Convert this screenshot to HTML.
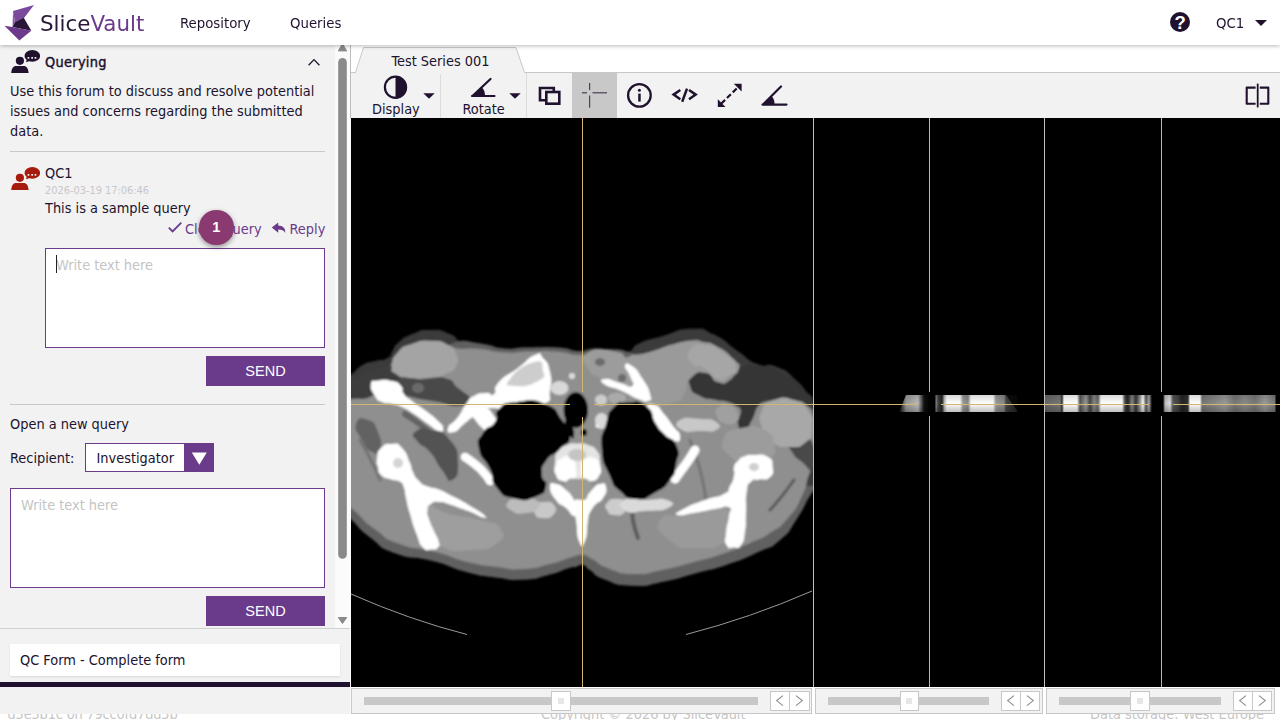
<!DOCTYPE html>
<html lang="en">
<head>
<meta charset="utf-8">
<title>SliceVault</title>
<style>
*{box-sizing:border-box}
html,body{margin:0;padding:0}
body{width:1280px;height:720px;overflow:hidden;position:relative;background:#fff;color:#20122e;
  font-family:"DejaVu Sans Condensed","DejaVu Sans","Liberation Sans",sans-serif;font-size:14.4px;font-stretch:condensed}
.abs{position:absolute}
/* header */
#hdr{position:absolute;left:0;top:0;width:1280px;height:45px;background:#fff;box-shadow:0 1px 4px rgba(0,0,0,.28);z-index:20}
#logo{position:absolute;left:4px;top:4px}
#brand{font-stretch:normal;will-change:transform;position:absolute;left:40px;top:5.5px;font-family:"DejaVu Sans","Liberation Sans",sans-serif;font-size:21.4px;line-height:36px;color:#2a1738;white-space:nowrap}
#brand b{font-weight:normal;color:#6b3a8a}
.nav{will-change:transform;position:absolute;top:-0.5px;line-height:45px;font-size:14.8px;color:#20122e;white-space:nowrap}
/* left */
#left{position:absolute;left:0;top:0;width:351px;height:714px;background:#f2f2f2;z-index:5;border-right:1px solid #fbfbfb}
#foot{position:absolute;left:0;top:700px;width:1280px;height:20px;background:#fff;z-index:1;color:#c6c6c6;font-size:14.4px;overflow:hidden}
.t{position:absolute;white-space:nowrap;line-height:20px;margin-top:.9px}
.hr{position:absolute;left:10px;width:315px;height:1px;background:#c9c9c9}
.ta{position:absolute;background:#fff;border:1px solid #6b3a8a;color:#c4c4c4}
.ta span{position:absolute;left:10px;top:5.7px;line-height:20px;white-space:nowrap}
.send{position:absolute;left:206px;width:119px;height:30px;background:#693b8a;color:#fff;text-align:center;line-height:30px;font-family:"Liberation Sans",sans-serif;font-size:14.5px}
.pu{color:#6b3a8a}
/* main */
#main{position:absolute;left:350px;top:44px;width:930px;height:670px;background:#fff;z-index:4}
#tb{position:absolute;left:0;top:28px;width:930px;height:46px;background:#f2f2f2;border-top:1px solid #c8c8c8;border-left:1px solid #c8c8c8}
#views{position:absolute;left:1px;top:74px;width:929px;height:569px;background:#000;overflow:hidden}
.sl{position:absolute;top:643.6px;height:26px;background:#f2f2f2;border:1px solid #c8c8c8}
.trk{position:absolute;top:8.6px;height:7.6px;background:#c8c8c8}
.th{position:absolute;top:2.6px;width:19.4px;height:19.4px;background:#fff;border:1px solid #c8c8c8}
.th i{position:absolute;left:5.6px;top:5.6px;width:6.2px;height:6.2px;background:#e6e6e6}
.ab{position:absolute;top:2.6px;width:39.2px;height:19.6px;background:#fff;border:1px solid #c8c8c8}
</style>
</head>
<body>
<div id="foot">
  <span class="t" style="left:7.5px;top:2.8px;letter-spacing:-0.15px">d5e5b1c on 79cc0fd7dd5b</span>
  <span class="t" style="left:541px;top:2.8px">Copyright © 2026 by SliceVault</span>
  <span class="t" style="left:1090px;top:2.8px">Data storage: West Europe</span>
</div>

<div id="hdr">
  <svg id="logo" width="36" height="38" viewBox="0 0 36 38">
    <polygon points="30,1 9,7 11,18 20,14" fill="#7b4a9d"/>
    <polygon points="9,7 11,18 8.5,23" fill="#8a5aaa"/>
    <polygon points="19.8,13.8 11,18 8.5,23 27.3,26.8" fill="#2a1738"/>
    <polygon points="0.5,21.7 8.5,23 27.3,26.8 15.3,36.6" fill="#6b3a8a"/>
  </svg>
  <div id="brand">Slice<b>Vault</b></div>
  <div class="nav" style="left:180px">Repository</div>
  <div class="nav" style="left:290px">Queries</div>
  <svg class="abs" style="left:1170px;top:12px" width="20" height="20" viewBox="0 0 20 20"><circle cx="10" cy="10" r="10" fill="#20122e"/><text x="10.1" y="16.6" text-anchor="middle" font-family="Liberation Sans, sans-serif" font-weight="bold" font-size="18.5" fill="#fff">?</text></svg>
  <div class="nav" style="left:1216px">QC1</div>
  <svg class="abs" style="left:1255px;top:20px" width="12" height="6" viewBox="0 0 12 6"><polygon points="0,0 12,0 6,6" fill="#20122e"/></svg>
</div>

<div id="left">
  <div class="abs" style="left:335px;top:45px;width:15px;height:583px;background:#fbfbfb"></div>
  <div class="abs" style="left:350px;top:45px;width:1px;height:73px;background:#bdbdbd"></div>
  <svg class="abs" style="left:335px;top:45px" width="16" height="583" viewBox="335 45 16 583">
    <polygon points="342.5,43.5 346.7,50.9 338.3,50.9" fill="#8a8a8a" stroke="#8a8a8a" stroke-width="1" stroke-linejoin="round"/>
    <rect x="338.2" y="58" width="8.6" height="500.8" rx="4.3" fill="#8a8a8a"/>
    <polygon points="338.3,617.5 346.7,617.5 342.5,623.5" fill="#8a8a8a" stroke="#8a8a8a" stroke-width="1" stroke-linejoin="round"/>
  </svg>
  <svg class="abs" style="left:8px;top:48px;fill:#20122e" width="32" height="28" viewBox="8 48 32 28"><g id="qi">
    <circle cx="19.9" cy="60.8" r="4.1"/>
    <path d="M11.2,72.9 C11.6,68.5 13.2,65.9 16.2,65.9 H23.6 C26.6,65.9 28.2,68.5 28.6,72.9 Z"/>
    <ellipse cx="32.3" cy="55.9" rx="7.8" ry="5.9"/>
    <polygon points="26,62.2 27.2,58 30.5,60.8"/>
    <g fill="#f2f2f2"><rect x="27.6" y="57" width="1.7" height="1.7"/><rect x="31.3" y="57" width="1.7" height="1.7"/><rect x="34.6" y="57" width="1.7" height="1.7"/></g>
  </g></svg>
  <div class="t" style="left:45px;top:51.6px;-webkit-text-stroke:0.42px #20122e;letter-spacing:0.3px">Querying</div>
  <svg class="abs" style="left:306px;top:56px" width="16" height="12" viewBox="306 56 16 12"><path d="M308.6,65.3 L314,59.6 L319.4,65.3" fill="none" stroke="#20122e" stroke-width="1.25"/></svg>
  <div class="t" style="left:10px;top:80.4px">Use this forum to discuss and resolve potential</div>
  <div class="t" style="left:10px;top:100.3px">issues and concerns regarding the submitted</div>
  <div class="t" style="left:10px;top:120.2px">data.</div>
  <div class="hr" style="top:151px"></div>
  <svg class="abs" style="left:8px;top:165.2px;fill:#a61b0d" width="32" height="28" viewBox="8 48 32 28"><use href="#qi"/></svg>
  <div class="t" style="left:45px;top:161.8px">QC1</div>
  <div class="t" style="left:45px;top:180px;font-size:10.9px;color:#c6c6cc">2026-03-19 17:06:46</div>
  <div class="t" style="left:45px;top:197.5px">This is a sample query</div>
  <svg class="abs" style="left:167px;top:220px" width="16" height="14" viewBox="167 220 16 14"><path d="M168.8,227.6 L172.6,231.4 L181.3,222.7" fill="none" stroke="#6b3a8a" stroke-width="1.8"/></svg>
  <div class="t pu" style="left:185px;top:217.8px">Close query</div>
  <svg class="abs" style="left:271px;top:221px" width="16" height="13" viewBox="271 221 16 13"><path d="M278.2,222.4 L271.8,227.6 L278.2,232.8 V229.6 C281.6,229.6 284,230.4 285.2,233 C285.6,228.4 283,225.8 278.2,225.6 Z" fill="#6b3a8a"/></svg>
  <div class="t pu" style="left:289.5px;top:217.8px">Reply</div>
  <div class="ta" style="left:45px;top:248px;width:280px;height:100px"><span>Write text here</span><i style="position:absolute;left:10px;top:6px;width:1px;height:18px;background:#222"></i></div>
  <div class="send" style="top:356px">SEND</div>
  <div class="abs" style="left:199.2px;top:210.2px;width:34.4px;height:34.4px;border-radius:50%;background:#8a3a70;box-shadow:0 2px 5px rgba(0,0,0,.4);color:#fff;text-align:center;line-height:34.4px;font-family:'Liberation Sans',sans-serif;font-weight:bold;font-size:14.5px">1</div>
  <div class="hr" style="top:404px"></div>
  <div class="t" style="left:10px;top:412.8px">Open a new query</div>
  <div class="t" style="left:10px;top:447.5px">Recipient:</div>
  <div class="abs" style="left:85px;top:443.2px;width:129px;height:29.2px;background:#fff;border:1px solid #6b3a8a"><span class="t" style="left:10.5px;top:3px">Investigator</span><div class="abs" style="right:0;top:0;width:29px;height:27px;background:#693b8a"></div>
    <svg class="abs" style="left:105px;top:8px" width="17" height="14" viewBox="0 0 17 14"><polygon points="0.8,0.6 15.8,0.6 8.3,12.8" fill="#fff"/></svg></div>
  <div class="ta" style="left:10px;top:488px;width:315px;height:100px"><span>Write text here</span></div>
  <div class="send" style="top:596px">SEND</div>
  <div class="abs" style="left:0;top:628px;width:350px;height:1px;background:#d0d0d0"></div>
  <div class="abs" style="left:10px;top:643.6px;width:330px;height:32px;background:#fff;box-shadow:0 1px 2px rgba(0,0,0,.10)"><span class="t" style="left:10px;top:5.4px">QC Form - Complete form</span></div>
  <div class="abs" style="left:0;top:682.2px;width:350px;height:4.8px;background:#20122e"></div>
</div>

<div id="main">
  <svg class="abs" style="left:0;top:0;z-index:3" width="930" height="30" viewBox="350 44 930 30">
    <polygon points="355.5,72.5 363.5,47.5 516,47.5 524.5,72.5" fill="#f2f2f2" stroke="#c8c8c8" stroke-width="1"/>
    <rect x="356" y="72" width="168" height="2" fill="#f2f2f2"/>
  </svg>
  <div class="t" style="left:41.5px;top:6.0px;font-size:14.4px;z-index:4">Test Series 001</div>
  <div id="tb">
  <svg class="abs" style="left:-1px;top:-1px" width="930" height="46" viewBox="350 72 930 46">
    <g fill="#20122e" stroke="none">
      <!-- active bg -->
      <rect x="572" y="73" width="45" height="45" fill="#c8c8c8"/>
      <!-- separators -->
      <rect x="440" y="73" width="1" height="45" fill="#dcdcdc"/>
      <rect x="526" y="73" width="1" height="45" fill="#dcdcdc"/>
      <!-- display icon -->
      <circle cx="395.5" cy="87.3" r="10.6" fill="none" stroke="#20122e" stroke-width="2.2"/>
      <path d="M395.5,76.2 A11.1,11.1 0 0 1 395.5,98.4 Z"/>
      <polygon points="423.3,93.2 434.7,93.2 429,98.8"/>
      <!-- rotate icon -->
      <path d="M472,96 L494.5,96 M473,95.5 L490.5,79" fill="none" stroke="#20122e" stroke-width="2.2" stroke-linecap="round"/>
      <path d="M473,95.5 L481.8,87.2 A12,12 0 0 1 485,95.5 Z"/>
      <polygon points="509.3,93.2 520.7,93.2 515,98.8"/>
      <!-- windows icon -->
      <path d="M545.5,100.2 H540 V88 H553.8 V91.5" fill="none" stroke="#20122e" stroke-width="2.6"/>
      <rect x="546.3" y="92" width="13" height="11.7" fill="none" stroke="#20122e" stroke-width="2.6"/>
      <!-- crosshair icon -->
      <g fill="#4b4058">
        <rect x="589" y="83" width="1.2" height="7"/><rect x="589" y="95.5" width="1.2" height="12.2"/>
        <rect x="582" y="92.2" width="5" height="1.2"/><rect x="592.5" y="92.2" width="14.5" height="1.2"/>
      </g>
      <!-- info icon -->
      <circle cx="639.4" cy="95.4" r="11.3" fill="none" stroke="#20122e" stroke-width="2.3"/>
      <rect x="638.2" y="93.6" width="2.5" height="8"/><circle cx="639.4" cy="90.2" r="1.5"/>
      <!-- expand -->
      <path d="M719,105.8 L740.3,85" fill="none" stroke="#20122e" stroke-width="2.2" stroke-dasharray="5.5,2.6" stroke-dashoffset="-3"/>
      <polygon points="741.6,83.8 741.6,91.5 733.8,83.8"/>
      <polygon points="717.8,107 717.8,99.3 725.5,107"/>
      <!-- angle icon -->
      <path d="M762.5,104.6 L786.5,104.6 M763.5,104 L781,86.5" fill="none" stroke="#20122e" stroke-width="2.2" stroke-linecap="round"/>
      <path d="M763.5,104 L771.5,96 A11,11 0 0 1 774.5,104 Z"/>
      <!-- split icon -->
      <path d="M1255.6,87.6 H1246.7 V103.8 H1255.6 M1259.8,87.6 H1268.3 V103.8 H1259.8" fill="none" stroke="#20122e" stroke-width="2.1" stroke-linejoin="round"/>
      <rect x="1256.8" y="83.6" width="1.8" height="23.8"/>
    </g>
    <path d="M680.3,90 L673.6,94.6 L680.3,99.2 M687,88.6 L682.2,101.8 M689,90 L695.7,94.6 L689,99.2" fill="none" stroke="#20122e" stroke-width="2.5" stroke-linejoin="miter"/>
  </svg>
  <div class="t" style="left:21px;top:25.4px">Display</div>
  <div class="t" style="left:111.5px;top:25.4px">Rotate</div>
  </div>
  <div id="views">
<svg class="abs" style="left:0;top:0" width="929" height="569" viewBox="351 118 929 569">
<defs>
<filter id="bl" x="-5%" y="-5%" width="110%" height="110%"><feGaussianBlur stdDeviation="1.3"/></filter>
<clipPath id="c1"><rect x="351" y="118" width="462" height="569"/></clipPath>
</defs>
<g clip-path="url(#c1)"><g filter="url(#bl)">
<!--CT-->
<path d="M340.0,380.0C346.3,354.9 343.5,379.6 351.0,374.6C358.5,369.6 354.5,369.5 362.5,365.0C370.5,360.5 366.7,363.3 375.0,361.0C383.3,358.7 381.5,361.7 387.5,358.0C393.5,354.3 389.5,355.0 393.0,350.0C396.5,345.0 391.5,348.3 398.0,343.0C404.5,337.7 401.5,338.3 412.5,334.0C423.5,329.7 418.5,330.0 431.0,330.0C443.5,330.0 439.5,330.0 450.0,334.0C460.5,338.0 451.5,338.7 462.5,342.0C473.5,345.3 469.2,341.8 483.0,344.0C496.8,346.2 489.3,347.3 504.0,348.5C518.7,349.7 509.0,347.8 527.0,347.5C545.0,347.2 540.7,346.3 558.0,347.5C575.3,348.7 568.3,350.7 579.0,351.0C589.7,351.3 581.3,349.2 590.0,348.5C598.7,347.8 593.0,347.8 605.0,349.0C617.0,350.2 614.3,354.0 626.0,352.0C637.7,350.0 627.7,348.3 640.0,343.0C652.3,337.7 646.0,340.8 663.0,336.0C680.0,331.2 674.0,329.2 691.0,328.8C708.0,328.3 698.5,327.2 714.0,334.6C729.5,342.0 723.3,341.3 737.6,351.0C751.9,360.7 744.0,358.6 757.0,363.8C770.0,369.0 763.5,361.3 776.5,366.7C789.5,372.1 784.3,369.0 796.0,380.0C807.7,391.0 802.8,388.1 811.5,399.8C820.2,411.5 816.5,398.3 822.0,415.0C827.5,431.7 828.0,428.3 828.0,450.0C828.0,471.7 827.7,465.3 822.0,480.0C816.3,494.7 819.4,481.0 811.0,494.0C802.6,507.0 807.0,503.7 796.7,519.0C786.4,534.3 793.2,528.8 780.0,540.0C766.8,551.2 775.0,544.2 757.0,552.5C739.0,560.8 746.1,558.2 726.0,565.0C705.9,571.8 717.7,567.4 696.7,573.0C675.7,578.6 684.6,577.4 663.0,581.7C641.4,586.0 651.3,586.5 632.0,585.8C612.7,585.1 619.0,584.9 605.0,579.6C591.0,574.3 597.3,574.9 590.0,570.0C582.7,565.1 588.0,566.0 583.0,565.0C578.0,564.0 579.8,566.0 575.0,567.0C570.2,568.0 577.8,565.3 568.8,568.0C559.8,570.7 563.2,571.1 548.0,575.0C532.8,578.9 540.3,578.8 523.0,579.6C505.7,580.4 514.8,580.0 496.0,577.5C477.2,575.0 487.7,577.5 466.7,572.0C445.7,566.5 456.6,567.2 433.0,561.0C409.4,554.8 416.7,561.2 396.0,553.5C375.3,545.8 386.0,549.5 371.0,538.0C356.0,526.5 362.0,530.0 351.0,519.0C340.0,508.0 344.3,528.0 338.0,505.0C331.7,482.0 331.3,491.7 332.0,450.0C332.7,408.3 333.7,405.1 340.0,380.0Z" fill="#3a3a3a" />
<clipPath id="lowc"><rect x="330" y="486" width="500" height="120"/></clipPath>
<path d="M340.0,380.0C346.3,354.9 343.5,379.6 351.0,374.6C358.5,369.6 354.5,369.5 362.5,365.0C370.5,360.5 366.7,363.3 375.0,361.0C383.3,358.7 381.5,361.7 387.5,358.0C393.5,354.3 389.5,355.0 393.0,350.0C396.5,345.0 391.5,348.3 398.0,343.0C404.5,337.7 401.5,338.3 412.5,334.0C423.5,329.7 418.5,330.0 431.0,330.0C443.5,330.0 439.5,330.0 450.0,334.0C460.5,338.0 451.5,338.7 462.5,342.0C473.5,345.3 469.2,341.8 483.0,344.0C496.8,346.2 489.3,347.3 504.0,348.5C518.7,349.7 509.0,347.8 527.0,347.5C545.0,347.2 540.7,346.3 558.0,347.5C575.3,348.7 568.3,350.7 579.0,351.0C589.7,351.3 581.3,349.2 590.0,348.5C598.7,347.8 593.0,347.8 605.0,349.0C617.0,350.2 614.3,354.0 626.0,352.0C637.7,350.0 627.7,348.3 640.0,343.0C652.3,337.7 646.0,340.8 663.0,336.0C680.0,331.2 674.0,329.2 691.0,328.8C708.0,328.3 698.5,327.2 714.0,334.6C729.5,342.0 723.3,341.3 737.6,351.0C751.9,360.7 744.0,358.6 757.0,363.8C770.0,369.0 763.5,361.3 776.5,366.7C789.5,372.1 784.3,369.0 796.0,380.0C807.7,391.0 802.8,388.1 811.5,399.8C820.2,411.5 816.5,398.3 822.0,415.0C827.5,431.7 828.0,428.3 828.0,450.0C828.0,471.7 827.7,465.3 822.0,480.0C816.3,494.7 819.4,481.0 811.0,494.0C802.6,507.0 807.0,503.7 796.7,519.0C786.4,534.3 793.2,528.8 780.0,540.0C766.8,551.2 775.0,544.2 757.0,552.5C739.0,560.8 746.1,558.2 726.0,565.0C705.9,571.8 717.7,567.4 696.7,573.0C675.7,578.6 684.6,577.4 663.0,581.7C641.4,586.0 651.3,586.5 632.0,585.8C612.7,585.1 619.0,584.9 605.0,579.6C591.0,574.3 597.3,574.9 590.0,570.0C582.7,565.1 588.0,566.0 583.0,565.0C578.0,564.0 579.8,566.0 575.0,567.0C570.2,568.0 577.8,565.3 568.8,568.0C559.8,570.7 563.2,571.1 548.0,575.0C532.8,578.9 540.3,578.8 523.0,579.6C505.7,580.4 514.8,580.0 496.0,577.5C477.2,575.0 487.7,577.5 466.7,572.0C445.7,566.5 456.6,567.2 433.0,561.0C409.4,554.8 416.7,561.2 396.0,553.5C375.3,545.8 386.0,549.5 371.0,538.0C356.0,526.5 362.0,530.0 351.0,519.0C340.0,508.0 344.3,528.0 338.0,505.0C331.7,482.0 331.3,491.7 332.0,450.0C332.7,408.3 333.7,405.1 340.0,380.0Z" fill="#606060" clip-path="url(#lowc)"/>
<path d="M456.0,342.0C465.0,339.3 467.0,341.8 483.0,344.0C499.0,346.2 489.3,347.3 504.0,348.5C518.7,349.7 509.0,347.8 527.0,347.5C545.0,347.2 540.7,346.3 558.0,347.5C575.3,348.7 563.3,350.5 579.0,351.0C594.7,351.5 588.7,348.7 605.0,349.0C621.3,349.3 620.3,349.0 628.0,352.0C635.7,355.0 644.0,356.0 628.0,358.0C612.0,360.0 612.7,358.7 580.0,358.0C547.3,357.3 563.3,357.3 530.0,356.0C496.7,354.7 504.7,355.3 480.0,354.0C455.3,352.7 464.0,356.0 456.0,352.0C448.0,348.0 447.0,344.7 456.0,342.0Z" fill="#5e5e5e" />
<path d="M340.0,400.0C345.3,382.0 341.7,400.0 351.0,396.0C360.3,392.0 357.0,394.7 368.0,388.0C379.0,381.3 374.7,386.0 384.0,376.0C393.3,366.0 386.7,368.3 396.0,358.0C405.3,347.7 400.0,350.7 412.0,345.0C424.0,339.3 420.0,341.0 432.0,341.0C444.0,341.0 439.3,342.5 448.0,345.0C456.7,347.5 447.3,347.2 458.0,348.5C468.7,349.8 464.3,347.7 480.0,349.0C495.7,350.3 488.3,351.7 505.0,352.5C521.7,353.3 513.0,351.8 530.0,351.5C547.0,351.2 539.3,350.3 556.0,351.5C572.7,352.7 565.3,354.5 580.0,355.0C594.7,355.5 585.3,352.3 600.0,353.0C614.7,353.7 609.0,356.7 624.0,357.0C639.0,357.3 631.3,357.0 645.0,354.0C658.7,351.0 650.7,352.3 665.0,348.0C679.3,343.7 674.3,342.7 688.0,341.0C701.7,339.3 694.7,339.3 706.0,343.0C717.3,346.7 711.3,344.3 722.0,352.0C732.7,359.7 734.7,356.7 738.0,366.0C741.3,375.3 737.3,371.3 732.0,380.0C726.7,388.7 722.7,384.7 722.0,392.0C721.3,399.3 721.3,396.7 730.0,402.0C738.7,407.3 736.3,408.0 748.0,408.0C759.7,408.0 751.0,404.7 765.0,402.0C779.0,399.3 776.3,399.0 790.0,400.0C803.7,401.0 797.7,398.3 806.0,405.0C814.3,411.7 810.3,405.0 815.0,420.0C819.7,435.0 821.7,432.7 820.0,450.0C818.3,467.3 816.0,456.7 810.0,472.0C804.0,487.3 809.3,480.7 802.0,496.0C794.7,511.3 798.7,505.7 788.0,518.0C777.3,530.3 782.7,524.7 770.0,533.0C757.3,541.3 766.0,536.0 750.0,543.0C734.0,550.0 740.7,547.7 722.0,554.0C703.3,560.3 714.0,556.7 694.0,562.0C674.0,567.3 682.0,566.0 662.0,570.0C642.0,574.0 651.3,574.3 634.0,574.0C616.7,573.7 624.0,574.0 610.0,569.0C596.0,564.0 601.0,563.7 592.0,559.0C583.0,554.3 589.7,555.7 583.0,555.0C576.3,554.3 583.0,554.0 572.0,557.0C561.0,560.0 566.3,560.0 550.0,564.0C533.7,568.0 540.7,568.0 523.0,569.0C505.3,570.0 515.3,569.3 497.0,567.0C478.7,564.7 488.3,567.0 468.0,562.0C447.7,557.0 458.7,558.0 436.0,552.0C413.3,546.0 420.0,551.3 400.0,544.0C380.0,536.7 390.7,540.7 376.0,530.0C361.3,519.3 368.0,523.7 356.0,512.0C344.0,500.3 347.0,515.7 340.0,495.0C333.0,474.3 335.0,481.7 335.0,450.0C335.0,418.3 334.7,418.0 340.0,400.0Z" fill="#8f8f8f" />
<path d="M398.0,379.0C404.0,373.7 404.3,376.3 420.0,376.0C435.7,375.7 432.3,374.0 445.0,378.0C457.7,382.0 449.7,380.7 458.0,388.0C466.3,395.3 470.0,394.0 470.0,400.0C470.0,406.0 468.7,405.3 458.0,406.0C447.3,406.7 452.3,404.7 438.0,402.0C423.7,399.3 427.0,401.3 415.0,398.0C403.0,394.7 407.7,398.3 402.0,392.0C396.3,385.7 392.0,384.3 398.0,379.0Z" fill="#484848" />
<ellipse cx="418" cy="388" rx="6" ry="5" fill="#6a6a6a"/>
<path d="M340.0,378.0C344.0,370.7 342.0,380.0 352.0,378.0C362.0,376.0 358.0,376.0 370.0,372.0C382.0,368.0 379.3,366.0 388.0,366.0C396.7,366.0 392.7,367.3 396.0,372.0C399.3,376.7 403.3,376.0 398.0,380.0C392.7,384.0 388.7,378.7 380.0,384.0C371.3,389.3 381.3,391.0 372.0,396.0C362.7,401.0 362.7,397.7 352.0,399.0C341.3,400.3 344.0,407.0 340.0,400.0C336.0,393.0 336.0,385.3 340.0,378.0Z" fill="#3c3c3c" />
<path d="M405.0,414.0C410.7,418.0 410.3,416.7 422.0,426.0C433.7,435.3 434.0,436.7 440.0,442.0" fill="none" stroke="#636363" stroke-width="6" stroke-linecap="round" />
<path d="M692.0,372.0C697.3,367.3 697.3,368.7 706.0,372.0C714.7,375.3 710.0,379.3 718.0,382.0C726.0,384.7 722.7,384.7 730.0,380.0C737.3,375.3 730.0,372.7 740.0,368.0C750.0,363.3 746.7,364.7 760.0,366.0C773.3,367.3 766.7,365.3 780.0,372.0C793.3,378.7 789.3,376.0 800.0,386.0C810.7,396.0 815.3,397.3 812.0,402.0C808.7,406.7 803.3,401.3 790.0,400.0C776.7,398.7 782.0,396.7 772.0,398.0C762.0,399.3 766.7,396.7 760.0,404.0C753.3,411.3 757.0,411.3 752.0,420.0C747.0,428.7 749.7,428.7 745.0,430.0C740.3,431.3 739.7,431.3 738.0,424.0C736.3,416.7 743.3,415.3 740.0,408.0C736.7,400.7 736.0,404.7 728.0,402.0C720.0,399.3 725.3,402.0 716.0,400.0C706.7,398.0 708.7,400.7 700.0,396.0C691.3,391.3 692.7,394.0 690.0,386.0C687.3,378.0 686.7,376.7 692.0,372.0Z" fill="#363636" />
<path d="M648.0,380.0C653.0,375.3 653.7,376.7 665.0,378.0C676.3,379.3 677.7,378.7 682.0,384.0C686.3,389.3 684.7,391.3 678.0,394.0C671.3,396.7 671.3,392.7 662.0,392.0C652.7,391.3 654.7,396.0 650.0,392.0C645.3,388.0 643.0,384.7 648.0,380.0Z" fill="#5a5a5a" />
<path d="M415.0,432.0C419.7,428.0 420.3,427.3 432.0,430.0C443.7,432.7 441.3,429.3 450.0,440.0C458.7,450.7 457.3,448.7 458.0,462.0C458.7,475.3 457.3,477.3 452.0,480.0C446.7,482.7 449.3,479.3 442.0,470.0C434.7,460.7 438.0,461.3 430.0,452.0C422.0,442.7 423.0,448.7 418.0,442.0C413.0,435.3 410.3,436.0 415.0,432.0Z" fill="#525252" />
<path d="M356.0,424.0C358.0,417.3 360.7,417.3 368.0,420.0C375.3,422.7 374.0,422.0 378.0,432.0C382.0,442.0 382.0,443.3 380.0,450.0C378.0,456.7 378.0,455.3 372.0,452.0C366.0,448.7 367.3,449.3 362.0,440.0C356.7,430.7 354.0,430.7 356.0,424.0Z" fill="#626262" />
<path d="M788.0,440.0C790.7,435.3 791.7,436.7 800.0,438.0C808.3,439.3 808.7,434.0 813.0,444.0C817.3,454.0 816.7,462.0 813.0,468.0C809.3,474.0 809.0,467.3 802.0,462.0C795.0,456.7 796.7,459.3 792.0,452.0C787.3,444.7 785.3,444.7 788.0,440.0Z" fill="#4a4a4a" />
<path d="M794.0,480.0C790.0,485.3 790.0,486.0 782.0,496.0C774.0,506.0 774.0,505.3 770.0,510.0" fill="none" stroke="#5a5a5a" stroke-width="3" stroke-linecap="round" />
<path d="M632.0,512.0C632.7,516.3 632.0,516.3 634.0,525.0C636.0,533.7 636.7,533.7 638.0,538.0" fill="none" stroke="#5c5c5c" stroke-width="4" stroke-linecap="round" />
<path d="M360.0,440.0C364.0,447.3 365.3,448.7 372.0,462.0C378.7,475.3 377.3,474.0 380.0,480.0" fill="none" stroke="#727272" stroke-width="3" stroke-linecap="round" />
<path d="M690.0,440.0C693.3,450.0 694.7,450.0 700.0,470.0C705.3,490.0 704.0,490.0 706.0,500.0" fill="none" stroke="#747474" stroke-width="3" stroke-linecap="round" />
<path d="M392.0,366.0C392.7,358.7 391.3,359.3 398.0,352.0C404.7,344.7 400.7,347.7 412.0,344.0C423.3,340.3 420.0,340.7 432.0,341.0C444.0,341.3 440.0,340.7 448.0,345.0C456.0,349.3 453.3,347.0 456.0,354.0C458.7,361.0 459.3,359.3 456.0,366.0C452.7,372.7 454.7,370.0 446.0,374.0C437.3,378.0 442.0,376.7 430.0,378.0C418.0,379.3 421.3,379.3 410.0,378.0C398.7,376.7 402.0,378.0 396.0,374.0C390.0,370.0 391.3,373.3 392.0,366.0Z" fill="#a4a4a4" />
<path d="M628.0,358.0C633.3,352.0 633.0,357.0 650.0,352.0C667.0,347.0 662.3,346.3 679.0,343.0C695.7,339.7 687.0,340.7 700.0,342.0C713.0,343.3 706.7,341.0 718.0,347.0C729.3,353.0 727.0,353.0 734.0,360.0C741.0,367.0 740.3,362.0 739.0,368.0C737.7,374.0 737.0,373.3 730.0,378.0C723.0,382.7 726.0,383.7 718.0,382.0C710.0,380.3 715.0,374.3 706.0,373.0C697.0,371.7 698.3,371.0 691.0,378.0C683.7,385.0 689.3,386.0 684.0,394.0C678.7,402.0 686.3,399.3 675.0,402.0C663.7,404.7 659.7,408.0 650.0,402.0C640.3,396.0 651.3,394.7 646.0,384.0C640.7,373.3 640.0,378.7 634.0,370.0C628.0,361.3 622.7,364.0 628.0,358.0Z" fill="#9a9a9a" />
<path d="M690.0,350.0C694.7,343.7 695.3,344.3 706.0,345.0C716.7,345.7 712.0,345.0 722.0,352.0C732.0,359.0 734.0,358.0 736.0,366.0C738.0,374.0 734.7,372.0 728.0,376.0C721.3,380.0 724.0,380.7 716.0,378.0C708.0,375.3 712.0,372.7 704.0,368.0C696.0,363.3 696.7,370.0 692.0,364.0C687.3,358.0 685.3,356.3 690.0,350.0Z" fill="#a6a6a6" />
<path d="M762.0,410.0C766.0,400.7 763.3,403.3 774.0,400.0C784.7,396.7 782.7,396.7 794.0,400.0C805.3,403.3 802.0,400.0 808.0,410.0C814.0,420.0 812.7,419.3 812.0,430.0C811.3,440.7 813.3,436.3 806.0,442.0C798.7,447.7 801.3,447.0 790.0,447.0C778.7,447.0 781.3,448.3 772.0,442.0C762.7,435.7 765.3,438.7 762.0,428.0C758.7,417.3 758.0,419.3 762.0,410.0Z" fill="#a8a8a8" />
<path d="M724.0,438.0C728.0,428.7 728.7,430.7 742.0,428.0C755.3,425.3 753.3,424.7 764.0,430.0C774.7,435.3 772.0,434.7 774.0,444.0C776.0,453.3 778.0,452.0 770.0,458.0C762.0,464.0 763.3,462.7 750.0,462.0C736.7,461.3 738.7,464.0 730.0,456.0C721.3,448.0 720.0,447.3 724.0,438.0Z" fill="#9c9c9c" />
<path d="M718.0,408.0C721.7,404.3 721.7,403.7 728.0,405.0C734.3,406.3 734.3,406.3 737.0,412.0C739.7,417.7 740.3,418.3 736.0,422.0C731.7,425.7 730.3,425.0 724.0,423.0C717.7,421.0 719.0,421.0 717.0,416.0C715.0,411.0 714.3,411.7 718.0,408.0Z" fill="#a0a0a0" />
<path d="M428.0,508.0C433.3,501.0 432.7,510.0 450.0,514.0C467.3,518.0 463.3,515.3 480.0,520.0C496.7,524.7 494.7,520.0 500.0,528.0C505.3,536.0 506.0,536.7 496.0,544.0C486.0,551.3 487.0,548.7 470.0,550.0C453.0,551.3 457.0,553.0 445.0,548.0C433.0,543.0 439.7,548.3 434.0,535.0C428.3,521.7 422.7,515.0 428.0,508.0Z" fill="#9e9e9e" />
<path d="M660.0,520.0C666.0,510.7 668.7,518.0 690.0,514.0C711.3,510.0 710.7,502.7 724.0,508.0C737.3,513.3 730.7,518.0 730.0,530.0C729.3,542.0 733.3,538.0 722.0,544.0C710.7,550.0 712.7,548.7 696.0,548.0C679.3,547.3 684.0,551.3 672.0,542.0C660.0,532.7 654.0,529.3 660.0,520.0Z" fill="#9a9a9a" />
<path d="M371.0,384.0C372.0,378.8 371.0,381.5 378.0,380.5C385.0,379.5 384.3,379.2 392.0,381.0C399.7,382.8 397.0,381.7 401.0,386.0C405.0,390.3 400.3,389.0 404.0,394.0C407.7,399.0 404.7,395.3 412.0,401.0C419.3,406.7 417.3,404.3 426.0,411.0C434.7,417.7 432.3,415.3 438.0,421.0C443.7,426.7 442.7,424.7 443.0,428.0C443.3,431.3 444.0,432.3 439.0,431.0C434.0,429.7 436.3,429.7 428.0,424.0C419.7,418.3 422.7,419.7 414.0,414.0C405.3,408.3 409.3,410.3 402.0,407.0C394.7,403.7 398.7,405.7 392.0,404.0C385.3,402.3 387.7,404.7 382.0,402.0C376.3,399.3 378.7,402.0 375.0,396.0C371.3,390.0 370.0,389.2 371.0,384.0Z" fill="#ffffff" />
<path d="M448.0,428.0C449.3,423.0 452.0,425.0 458.0,417.0C464.0,409.0 460.7,411.0 466.0,404.0C471.3,397.0 467.3,399.7 474.0,396.0C480.7,392.3 479.3,393.7 486.0,393.0C492.7,392.3 489.7,397.7 494.0,394.0C498.3,390.3 491.0,390.7 499.0,382.0C507.0,373.3 506.0,377.0 518.0,368.0C530.0,359.0 526.7,358.3 535.0,355.0C543.3,351.7 538.0,352.3 543.0,358.0C548.0,363.7 547.7,361.3 550.0,372.0C552.3,382.7 551.3,379.7 550.0,390.0C548.7,400.3 552.7,399.3 546.0,403.0C539.3,406.7 540.7,401.0 530.0,401.0C519.3,401.0 523.0,400.3 514.0,403.0C505.0,405.7 509.7,407.3 503.0,409.0C496.3,410.7 500.3,407.7 494.0,408.0C487.7,408.3 490.7,407.3 484.0,410.0C477.3,412.7 480.7,411.3 474.0,416.0C467.3,420.7 470.7,418.7 464.0,424.0C457.3,429.3 459.3,430.7 454.0,432.0C448.7,433.3 446.7,433.0 448.0,428.0Z" fill="#ffffff" />
<path d="M510.0,379.0C516.0,371.0 523.0,364.7 534.0,362.0C545.0,359.3 541.7,364.7 543.0,371.0C544.3,377.3 547.0,376.0 538.0,381.0C529.0,386.0 525.3,386.7 516.0,386.0C506.7,385.3 504.0,387.0 510.0,379.0Z" fill="#cdcdcd" />
<path d="M472.0,412.0C474.7,407.7 476.7,406.7 484.0,408.0C491.3,409.3 488.7,408.7 494.0,416.0C499.3,423.3 497.7,422.0 500.0,430.0C502.3,438.0 503.7,436.7 501.0,440.0C498.3,443.3 497.7,443.3 492.0,440.0C486.3,436.7 489.3,436.3 484.0,430.0C478.7,423.7 480.0,427.0 476.0,421.0C472.0,415.0 469.3,416.3 472.0,412.0Z" fill="#ffffff" />
<path d="M465.0,457.0C468.7,459.7 469.3,459.3 476.0,465.0C482.7,470.7 480.3,468.7 485.0,474.0C489.7,479.3 488.3,478.7 490.0,481.0" fill="none" stroke="#ffffff" stroke-width="8.5" stroke-linecap="round" />
<path d="M377.0,459.0C378.0,452.7 376.0,453.0 381.0,448.0C386.0,443.0 385.0,444.0 392.0,444.0C399.0,444.0 396.0,441.7 402.0,448.0C408.0,454.3 406.5,455.3 410.0,463.0C413.5,470.7 409.5,465.0 412.5,471.0C415.5,477.0 413.8,475.8 419.0,481.0C424.2,486.2 421.3,483.7 428.0,486.5C434.7,489.3 431.7,486.7 439.0,489.5C446.3,492.3 442.7,491.3 450.0,495.0C457.3,498.7 453.7,496.5 461.0,500.5C468.3,504.5 464.3,502.2 472.0,507.0C479.7,511.8 480.3,511.5 484.0,515.0C487.7,518.5 487.0,518.3 483.0,517.5C479.0,516.7 479.3,515.5 472.0,512.5C464.7,509.5 468.3,511.2 461.0,508.5C453.7,505.8 457.3,506.7 450.0,504.5C442.7,502.3 445.3,502.2 439.0,502.0C432.7,501.8 434.8,501.3 431.0,504.0C427.2,506.7 428.2,505.0 427.5,510.0C426.8,515.0 426.8,512.0 429.0,519.0C431.2,526.0 430.8,523.7 434.0,531.0C437.2,538.3 437.2,535.5 438.5,541.0C439.8,546.5 440.5,544.7 438.0,547.5C435.5,550.3 436.0,549.5 431.0,549.5C426.0,549.5 427.8,552.7 423.0,547.5C418.2,542.3 420.8,545.2 416.5,534.0C412.2,522.8 413.5,526.0 410.0,514.0C406.5,502.0 408.0,506.7 406.0,498.0C404.0,489.3 406.0,493.4 404.0,488.0C402.0,482.6 404.1,484.5 400.0,481.7C395.9,478.9 398.0,481.8 391.7,479.6C385.4,477.4 385.6,479.2 381.0,475.0C376.4,470.8 379.3,472.3 378.0,467.0C376.7,461.7 376.0,465.3 377.0,459.0Z" fill="#ffffff" />
<ellipse cx="398" cy="463" rx="5" ry="5" fill="#d4d4d4"/>
<path d="M555.0,462.0C555.7,454.3 554.0,456.7 558.0,451.0C562.0,445.3 560.7,447.5 567.0,445.0C573.3,442.5 570.0,443.5 577.0,443.5C584.0,443.5 581.3,442.5 588.0,445.0C594.7,447.5 593.0,445.3 597.0,451.0C601.0,456.7 599.3,454.3 600.0,462.0C600.7,469.7 601.7,467.7 599.0,474.0C596.3,480.3 598.3,479.0 592.0,481.0C585.7,483.0 586.0,480.3 580.0,480.0C574.0,479.7 579.7,479.7 574.0,480.0C568.3,480.3 569.0,483.0 563.0,481.0C557.0,479.0 558.7,480.3 556.0,474.0C553.3,467.7 554.3,469.7 555.0,462.0Z" fill="#e4e4e4" />
<path d="M556.0,466.0C558.0,460.3 556.7,460.7 562.0,458.0C567.3,455.3 567.3,454.7 572.0,458.0C576.7,461.3 575.3,461.0 576.0,468.0C576.7,475.0 578.3,474.7 574.0,479.0C569.7,483.3 569.0,482.3 563.0,481.0C557.0,479.7 558.3,480.0 556.0,475.0C553.7,470.0 554.0,471.7 556.0,466.0Z" fill="#ffffff" />
<path d="M584.0,460.0C588.3,456.7 588.7,456.0 594.0,458.0C599.3,460.0 598.3,460.0 600.0,466.0C601.7,472.0 602.0,471.0 599.0,476.0C596.0,481.0 596.3,480.3 591.0,481.0C585.7,481.7 586.3,482.3 583.0,478.0C579.7,473.7 580.7,474.0 581.0,468.0C581.3,462.0 579.7,463.3 584.0,460.0Z" fill="#ffffff" />
<ellipse cx="577" cy="455" rx="9" ry="6" fill="#c4c4c4"/>
<path d="M566.0,482.0C570.3,477.0 570.0,479.0 578.0,479.0C586.0,479.0 585.7,477.0 590.0,482.0C594.3,487.0 593.0,487.7 591.0,494.0C589.0,500.3 590.3,498.7 584.0,501.0C577.7,503.3 578.3,503.3 572.0,501.0C565.7,498.7 567.0,500.3 565.0,494.0C563.0,487.7 561.7,487.0 566.0,482.0Z" fill="#9a9a9a" />
<path d="M550.0,487.0C550.0,481.7 550.7,483.0 556.0,484.0C561.3,485.0 560.0,484.7 566.0,490.0C572.0,495.3 570.0,493.3 574.0,500.0C578.0,506.7 578.0,504.7 578.0,510.0C578.0,515.3 578.0,516.7 574.0,516.0C570.0,515.3 572.0,513.3 566.0,508.0C560.0,502.7 561.3,507.0 556.0,500.0C550.7,493.0 550.0,492.3 550.0,487.0Z" fill="#ffffff" />
<path d="M606.0,487.0C605.0,482.3 604.7,483.0 600.0,484.0C595.3,485.0 596.7,484.7 592.0,490.0C587.3,495.3 588.7,493.3 586.0,500.0C583.3,506.7 583.3,505.3 584.0,510.0C584.7,514.7 584.3,515.7 588.0,514.0C591.7,512.3 590.0,510.3 595.0,505.0C600.0,499.7 599.3,504.0 603.0,498.0C606.7,492.0 607.0,491.7 606.0,487.0Z" fill="#ffffff" />
<path d="M573.0,504.0C575.0,497.3 576.3,500.0 582.0,500.0C587.7,500.0 588.0,497.3 590.0,504.0C592.0,510.7 589.7,507.7 588.0,520.0C586.3,532.3 588.0,534.0 585.0,541.0C582.0,548.0 582.0,548.0 579.0,541.0C576.0,534.0 578.0,532.3 576.0,520.0C574.0,507.7 571.0,510.7 573.0,504.0Z" fill="#ffffff" />
<path d="M534.0,506.0C537.0,502.0 537.3,502.3 544.0,502.0C550.7,501.7 551.0,500.7 554.0,505.0C557.0,509.3 557.0,510.7 553.0,515.0C549.0,519.3 548.0,518.3 542.0,518.0C536.0,517.7 537.7,518.0 535.0,514.0C532.3,510.0 531.0,510.0 534.0,506.0Z" fill="#c8c8c8" />
<path d="M607.0,503.0C610.0,499.3 609.7,499.0 616.0,499.0C622.3,499.0 623.0,498.7 626.0,503.0C629.0,507.3 629.0,508.0 625.0,512.0C621.0,516.0 620.0,515.7 614.0,515.0C608.0,514.3 609.3,514.0 607.0,510.0C604.7,506.0 604.0,506.7 607.0,503.0Z" fill="#cccccc" />
<path d="M508.0,502.0C511.3,497.7 512.7,498.7 522.0,498.0C531.3,497.3 530.7,496.7 536.0,500.0C541.3,503.3 541.3,503.7 538.0,508.0C534.7,512.3 534.7,512.0 526.0,513.0C517.3,514.0 518.0,514.7 512.0,511.0C506.0,507.3 504.7,506.3 508.0,502.0Z" fill="#bcbcbc" />
<path d="M624.0,500.0C630.3,496.3 630.7,500.0 645.0,500.0C659.3,500.0 659.3,497.3 667.0,500.0C674.7,502.7 675.3,504.3 668.0,508.0C660.7,511.7 659.0,510.0 645.0,511.0C631.0,512.0 633.0,514.7 626.0,511.0C619.0,507.3 617.7,503.7 624.0,500.0Z" fill="#dadada" />
<path d="M586.0,354.0C594.0,348.3 598.0,348.3 612.0,351.0C626.0,353.7 620.7,352.3 628.0,362.0C635.3,371.7 636.7,372.0 634.0,380.0C631.3,388.0 631.3,386.7 620.0,386.0C608.7,385.3 610.7,384.0 600.0,378.0C589.3,372.0 592.7,376.0 588.0,368.0C583.3,360.0 578.0,359.7 586.0,354.0Z" fill="#9c9c9c" />
<ellipse cx="600" cy="362" rx="5" ry="4" fill="#6c6c6c"/>
<ellipse cx="622" cy="378" rx="4" ry="4" fill="#6c6c6c"/>
<path d="M625.0,366.0C625.7,362.7 626.3,362.0 632.0,366.0C637.7,370.0 636.0,368.7 642.0,378.0C648.0,387.3 648.0,386.3 650.0,394.0C652.0,401.7 652.0,399.3 648.0,401.0C644.0,402.7 646.7,402.3 638.0,399.0C629.3,395.7 633.3,396.0 622.0,391.0C610.7,386.0 609.3,388.0 604.0,384.0C598.7,380.0 600.7,379.3 606.0,379.0C611.3,378.7 611.3,380.7 620.0,383.0C628.7,385.3 628.7,388.3 632.0,386.0C635.3,383.7 632.3,382.7 630.0,376.0C627.7,369.3 624.3,369.3 625.0,366.0Z" fill="#ffffff" />
<path d="M646.0,408.0C647.0,403.0 649.0,403.0 655.0,405.0C661.0,407.0 658.0,407.0 664.0,414.0C670.0,421.0 667.7,418.7 673.0,426.0C678.3,433.3 679.7,431.0 680.0,436.0C680.3,441.0 680.0,442.3 674.0,441.0C668.0,439.7 669.3,439.0 662.0,432.0C654.7,425.0 657.3,428.0 652.0,420.0C646.7,412.0 645.0,413.0 646.0,408.0Z" fill="#ffffff" />
<path d="M680.0,420.0C686.0,416.3 688.0,418.3 700.0,419.0C712.0,419.7 710.7,418.3 716.0,422.0C721.3,425.7 721.3,427.0 716.0,430.0C710.7,433.0 711.3,431.0 700.0,431.0C688.7,431.0 688.7,433.7 682.0,430.0C675.3,426.3 674.0,423.7 680.0,420.0Z" fill="#c8c8c8" />
<path d="M695.0,450.0C692.7,453.7 693.0,453.7 688.0,461.0C683.0,468.3 684.3,466.0 680.0,472.0C675.7,478.0 676.7,476.7 675.0,479.0" fill="none" stroke="#ffffff" stroke-width="9" stroke-linecap="round" />
<path d="M738.0,461.0C741.3,457.5 739.0,458.5 744.0,456.5C749.0,454.5 745.2,454.9 753.0,455.0C760.8,455.1 760.9,452.7 767.5,456.7C774.1,460.7 772.0,460.1 772.7,467.0C773.4,473.9 774.2,473.3 769.6,477.5C765.0,481.7 765.2,478.2 759.0,479.6C752.8,481.0 755.1,477.6 751.0,481.7C746.9,485.8 748.4,481.6 746.7,492.0C745.0,502.4 746.6,499.8 746.0,513.0C745.4,526.2 746.7,521.0 745.0,531.7C743.3,542.4 744.7,539.7 741.0,545.0C737.3,550.3 738.8,547.5 734.0,547.5C729.2,547.5 729.2,549.8 726.5,545.0C723.8,540.2 725.2,542.7 726.0,533.0C726.8,523.3 728.0,524.5 729.0,516.0C730.0,507.5 733.7,509.8 729.0,507.5C724.3,505.2 725.8,507.3 715.0,509.0C704.2,510.7 709.0,510.5 696.7,512.5C684.4,514.5 682.2,516.2 678.0,515.0C673.8,513.8 675.0,513.8 684.0,508.8C693.0,503.8 691.8,504.9 705.0,500.0C718.2,495.1 715.4,498.7 723.8,494.0C732.1,489.3 726.6,492.2 730.0,486.0C733.4,479.8 732.7,481.7 734.0,475.4C735.3,469.1 732.7,471.8 734.0,467.0C735.3,462.2 734.7,464.5 738.0,461.0Z" fill="#ffffff" />
<ellipse cx="754" cy="467" rx="5" ry="4" fill="#cfcfcf"/>
<ellipse cx="559.5" cy="388" rx="9" ry="7" fill="#d8d8d8"/>
<ellipse cx="572" cy="376" rx="3" ry="3" fill="#dcdcdc"/>
<ellipse cx="601" cy="400" rx="6" ry="5.5" fill="#cccccc"/>
<ellipse cx="617" cy="398" rx="9" ry="5.5" fill="#aaaaaa"/>
<ellipse cx="601.5" cy="421" rx="6.5" ry="8" fill="#d8d8d8"/>
<ellipse cx="597" cy="426" rx="1.5" ry="1.5" fill="#ffffff"/>
<path d="M499.0,409.0C506.2,402.3 501.4,403.7 516.7,402.0C532.0,400.3 529.9,398.0 545.0,404.0C560.1,410.0 553.7,409.3 562.0,420.0C570.3,430.7 570.7,426.3 570.0,436.0C569.3,445.7 568.0,440.7 560.0,449.0C552.0,457.3 552.0,452.3 546.0,461.0C540.0,469.7 542.0,466.7 542.0,475.0C542.0,483.3 548.0,478.8 546.0,486.0C544.0,493.2 546.5,492.3 536.0,496.5C525.5,500.7 527.5,501.5 514.4,498.5C501.3,495.5 504.8,497.3 496.7,487.5C488.6,477.7 495.9,481.8 490.0,469.0C484.1,456.2 481.3,461.0 479.0,449.0C476.7,437.0 477.7,442.0 483.0,433.0C488.3,424.0 489.7,430.0 495.0,422.0C500.3,414.0 491.8,415.7 499.0,409.0Z" fill="#000" />
<path d="M614.0,407.0C621.0,399.8 616.3,402.8 627.0,402.5C637.7,402.2 636.3,398.8 646.0,406.0C655.7,413.2 650.0,414.7 656.0,424.0C662.0,433.3 657.1,426.7 664.0,434.0C670.9,441.3 672.7,435.9 676.7,446.0C680.7,456.1 678.2,453.1 676.0,464.4C673.8,475.7 677.2,470.5 670.0,480.0C662.8,489.5 665.7,486.7 654.4,493.0C643.1,499.3 647.5,499.7 636.0,499.0C624.5,498.3 628.8,498.8 620.0,491.0C611.2,483.2 615.8,489.5 609.7,475.5C603.6,461.5 603.0,466.2 601.8,449.0C600.6,431.8 601.9,438.0 606.0,424.0C610.1,410.0 607.0,414.2 614.0,407.0Z" fill="#000" />
<ellipse cx="575.8" cy="410" rx="12.2" ry="17.8" fill="#000"/>
<path d="M566.0,420.0C567.7,418.7 569.3,420.7 572.0,426.0C574.7,431.3 574.3,432.3 574.0,436.0C573.7,439.7 573.3,439.0 571.0,437.0C568.7,435.0 568.7,435.7 567.0,430.0C565.3,424.3 564.3,421.3 566.0,420.0Z" fill="#000" />
<ellipse cx="584" cy="432.5" rx="3" ry="3.5" fill="#000"/>
<!--/CT-->
</g>
<path d="M351,594 Q410,620 467,634.5" fill="none" stroke="#9a9a9a" stroke-width="1"/>
<path d="M686,634.5 Q750,618 812,591" fill="none" stroke="#9a9a9a" stroke-width="1"/>
</g>
<!-- strips -->
<g id="strips"><defs><linearGradient id="gs" x1="0" x2="1" y1="0" y2="0"><stop offset="0.0000" stop-color="#000"/><stop offset="0.0336" stop-color="#555"/><stop offset="0.0588" stop-color="#999"/><stop offset="0.1092" stop-color="#aaa"/><stop offset="0.1597" stop-color="#bbb"/><stop offset="0.1849" stop-color="#666"/><stop offset="0.2101" stop-color="#111"/><stop offset="0.2605" stop-color="#000"/><stop offset="0.3025" stop-color="#000"/><stop offset="0.3109" stop-color="#888"/><stop offset="0.3277" stop-color="#444"/><stop offset="0.3613" stop-color="#222"/><stop offset="0.3824" stop-color="#bbb"/><stop offset="0.4034" stop-color="#fff"/><stop offset="0.5126" stop-color="#fff"/><stop offset="0.5378" stop-color="#999"/><stop offset="0.5798" stop-color="#888"/><stop offset="0.6050" stop-color="#fff"/><stop offset="0.7899" stop-color="#fff"/><stop offset="0.8151" stop-color="#999"/><stop offset="0.8824" stop-color="#888"/><stop offset="0.8992" stop-color="#444"/><stop offset="0.9916" stop-color="#222"/><stop offset="1.0000" stop-color="#000"/></linearGradient><linearGradient id="gc" x1="0" x2="1" y1="0" y2="0"><stop offset="0.0000" stop-color="#666"/><stop offset="0.0649" stop-color="#777"/><stop offset="0.0736" stop-color="#333"/><stop offset="0.0823" stop-color="#fff"/><stop offset="0.1385" stop-color="#fff"/><stop offset="0.1515" stop-color="#555"/><stop offset="0.1775" stop-color="#999"/><stop offset="0.1948" stop-color="#444"/><stop offset="0.2121" stop-color="#888"/><stop offset="0.2294" stop-color="#666"/><stop offset="0.2424" stop-color="#fff"/><stop offset="0.3333" stop-color="#fff"/><stop offset="0.3463" stop-color="#444"/><stop offset="0.3593" stop-color="#222"/><stop offset="0.3766" stop-color="#888"/><stop offset="0.3939" stop-color="#333"/><stop offset="0.4113" stop-color="#999"/><stop offset="0.4242" stop-color="#fff"/><stop offset="0.4372" stop-color="#555"/><stop offset="0.4502" stop-color="#aaa"/><stop offset="0.4632" stop-color="#000"/><stop offset="0.5108" stop-color="#000"/><stop offset="0.5195" stop-color="#bbb"/><stop offset="0.5411" stop-color="#ddd"/><stop offset="0.5541" stop-color="#555"/><stop offset="0.5758" stop-color="#444"/><stop offset="0.5931" stop-color="#222"/><stop offset="0.6190" stop-color="#333"/><stop offset="0.6277" stop-color="#fff"/><stop offset="0.6710" stop-color="#fff"/><stop offset="0.6797" stop-color="#777"/><stop offset="0.7359" stop-color="#888"/><stop offset="0.7792" stop-color="#999"/><stop offset="0.8225" stop-color="#777"/><stop offset="0.8658" stop-color="#8a8a8a"/><stop offset="0.9091" stop-color="#777"/><stop offset="0.9524" stop-color="#999"/><stop offset="0.9957" stop-color="#777"/><stop offset="1.0000" stop-color="#000"/></linearGradient>
<linearGradient id="gv" x1="0" x2="0" y1="0" y2="1"><stop offset="0" stop-color="#000" stop-opacity=".15"/><stop offset=".5" stop-color="#000" stop-opacity="0"/><stop offset="1" stop-color="#000" stop-opacity=".25"/></linearGradient></defs>
<rect x="899" y="395" width="119" height="17" fill="url(#gs)"/>
<polygon points="899,395 906,395 899,412" fill="#000"/><polygon points="1006,395 1018,395 1018,412" fill="#000" opacity=".8"/>
<rect x="1045" y="395" width="231" height="17" fill="url(#gc)"/>
<rect x="899" y="395" width="377" height="17" fill="url(#gv)"/>
</g>
<!-- borders -->
<rect x="813" y="118" width="1" height="569" fill="#c0c0c0"/>
<rect x="1044" y="118" width="1" height="569" fill="#c0c0c0"/>
<!-- crosshairs -->
<g fill="#d2b86e">
<rect x="582" y="118" width="1" height="274"/><rect x="582" y="417" width="1" height="270"/>
<rect x="351" y="404" width="219" height="1"/><rect x="594" y="404" width="219" height="1"/>
<rect x="814" y="404" width="103" height="1"/><rect x="941" y="404" width="103" height="1"/>
<rect x="1045" y="404" width="104" height="1"/><rect x="1173" y="404" width="107" height="1"/>
</g>
<g fill="#d2b86e">
<rect x="929" y="118" width="1" height="274"/><rect x="929" y="416" width="1" height="271"/>
<rect x="1161" y="118" width="1" height="274"/><rect x="1161" y="416" width="1" height="271"/>
</g>
</svg>
</div>
  <div class="sl" style="left:0.6px;width:461.2px"><div class="trk" style="left:12.4px;width:394.0px"></div><div class="th" style="left:199.7px"><i></i></div><div class="ab" style="left:418.9px"><svg width="38" height="19" viewBox="0 0 38 19" style="position:absolute;left:-1px;top:-1px"><path d="M12.9,4.6 L6.7,9.6 L12.9,14.6 M26,4.6 L32.2,9.6 L26,14.6" fill="none" stroke="#8a8a8a" stroke-width="1.1"/><rect x="19" y="0" width="1" height="20" fill="#c8c8c8"/></svg></div></div>
  <div class="sl" style="left:465.0px;width:227.8px"><div class="trk" style="left:12.0px;width:161.0px"></div><div class="th" style="left:83.5px"><i></i></div><div class="ab" style="left:185.0px"><svg width="38" height="19" viewBox="0 0 38 19" style="position:absolute;left:-1px;top:-1px"><path d="M12.9,4.6 L6.7,9.6 L12.9,14.6 M26,4.6 L32.2,9.6 L26,14.6" fill="none" stroke="#8a8a8a" stroke-width="1.1"/><rect x="19" y="0" width="1" height="20" fill="#c8c8c8"/></svg></div></div>
  <div class="sl" style="left:696.0px;width:229.0px"><div class="trk" style="left:12.0px;width:162.0px"></div><div class="th" style="left:83.3px"><i></i></div><div class="ab" style="left:186.0px"><svg width="38" height="19" viewBox="0 0 38 19" style="position:absolute;left:-1px;top:-1px"><path d="M12.9,4.6 L6.7,9.6 L12.9,14.6 M26,4.6 L32.2,9.6 L26,14.6" fill="none" stroke="#8a8a8a" stroke-width="1.1"/><rect x="19" y="0" width="1" height="20" fill="#c8c8c8"/></svg></div></div>
</div>
</body>
</html>
